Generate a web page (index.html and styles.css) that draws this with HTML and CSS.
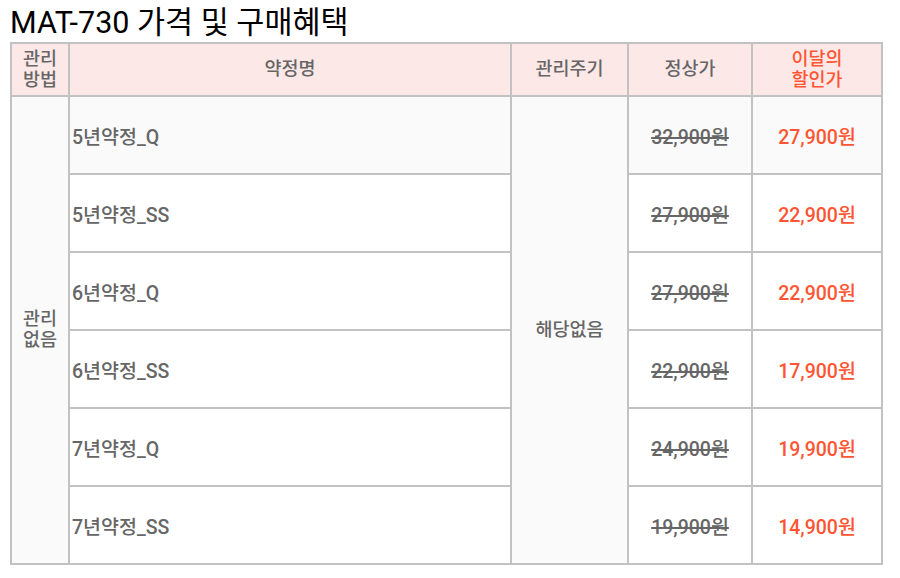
FILE: index.html
```html
<!DOCTYPE html>
<html lang="ko">
<head>
<meta charset="utf-8">
<link rel="stylesheet" href="styles.css">
</head>
<body>
<h1 class="title">MAT-730 가격 및 구매혜택</h1>
<table class="price-table">
  <colgroup>
    <col class="c1"><col class="c2"><col class="c3"><col class="c4"><col class="c5">
  </colgroup>
  <thead>
    <tr>
      <th>관리<br>방법</th>
      <th>약정명</th>
      <th>관리주기</th>
      <th>정상가</th>
      <th class="hot">이달의<br>할인가</th>
    </tr>
  </thead>
  <tbody>
    <tr class="shade">
      <td rowspan="6" class="side">관리<br>없음</td>
      <td class="name">5년약정_Q</td>
      <td rowspan="6" class="side">해당없음</td>
      <td class="old">32,900원</td>
      <td class="sale">27,900원</td>
    </tr>
    <tr>
      <td class="name">5년약정_SS</td>
      <td class="old">27,900원</td>
      <td class="sale">22,900원</td>
    </tr>
    <tr>
      <td class="name">6년약정_Q</td>
      <td class="old">27,900원</td>
      <td class="sale">22,900원</td>
    </tr>
    <tr>
      <td class="name">6년약정_SS</td>
      <td class="old">22,900원</td>
      <td class="sale">17,900원</td>
    </tr>
    <tr>
      <td class="name">7년약정_Q</td>
      <td class="old">24,900원</td>
      <td class="sale">19,900원</td>
    </tr>
    <tr>
      <td class="name">7년약정_SS</td>
      <td class="old">19,900원</td>
      <td class="sale">14,900원</td>
    </tr>
  </tbody>
</table>
</body>
</html>
```
FILE: styles.css
```css
html, body {
  margin: 0;
  padding: 0;
  background: #ffffff;
}
body {
  font-family: Roboto, "Noto Sans CJK KR", sans-serif;
}
.title {
  margin: 0;
  padding: 6px 0 0 10px;
  height: 42px;
  box-sizing: border-box;
  font-size: 30.5px;
  font-weight: 400;
  line-height: 34px;
  color: #000;
}
.price-table {
  margin-left: 10px;
  width: 873px;
  border-collapse: collapse;
  table-layout: fixed;
}
.c1 { width: 58px; }
.c2 { width: 442px; }
.c3 { width: 117px; }
.c4 { width: 124px; }
.c5 { width: 130px; }
.price-table th,
.price-table td {
  border: 2px solid #c2c2c2;
  padding: 0;
  color: #666;
}
.price-table th {
  height: 51px;
  background: #fde8e8;
  font-size: 18.5px;
  font-weight: 500;
  line-height: 21px;
  text-align: center;
}
.price-table th.hot {
  color: #ff5533;
}
.price-table td {
  height: 76px;
  font-size: 19.5px;
  font-weight: 500;
  text-align: center;
  background: #fff;
}
.price-table tr.shade td {
  background: #fafafa;
}
.price-table td.side {
  background: #fafafa;
  font-size: 18.5px;
  line-height: 21px;
}
.price-table td.name {
  text-align: left;
  padding-left: 2px;
}
.price-table td.old {
  text-decoration: line-through;
  text-decoration-thickness: 2px;
}
.price-table td.sale {
  color: #ff5533;
}
```
